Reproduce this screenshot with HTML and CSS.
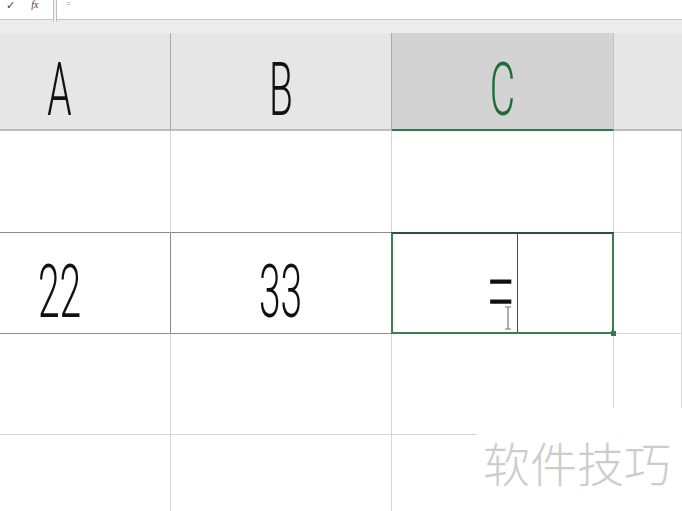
FILE: index.html
```html
<!DOCTYPE html>
<html lang="zh-CN">
<head>
<meta charset="utf-8">
<title>Excel</title>
<link rel="stylesheet" href="styles.css">
</head>
<body>
<div class="formula-bar">
  <div class="fb-buttons">
    <span class="fb-check">✓</span>
    <span class="fb-fx">fx</span>
  </div>
  <div class="fb-sep"></div>
  <div class="fb-input"><span class="fb-text">=</span></div>
</div>
<div class="strip"></div>
<div class="sheet">
  <div class="cell head"><span class="lbl">A</span></div>
  <div class="cell head"><span class="lbl">B</span></div>
  <div class="cell head head-sel"><span class="lbl">C</span></div>
  <div class="cell head head-d"></div>

  <div class="cell r1 dark-b"></div>
  <div class="cell r1 dark-b"></div>
  <div class="cell r1"></div>
  <div class="cell r1"></div>

  <div class="cell r2 dark-b dark-r"><span class="val">22</span></div>
  <div class="cell r2 dark-b dark-r"><span class="val">33</span></div>
  <div class="cell r2 active">
    <span class="eq">=</span>
    <span class="caret"></span>
    <svg class="ibeam" width="8" height="24" viewBox="0 0 8 24"><path d="M1 1h6M4 1v22M1 23h6" stroke="#777" stroke-width="1.2" fill="none"/></svg>
  </div>
  <div class="cell r2"></div>

  <div class="cell r3"></div>
  <div class="cell r3"></div>
  <div class="cell r3"></div>
  <div class="cell r3"></div>

  <div class="cell r4"></div>
  <div class="cell r4"></div>
  <div class="cell r4"></div>
  <div class="cell r4"></div>

  <div class="watermark">软件技巧</div>
</div>
</body>
</html>
```
FILE: styles.css
```css
* { box-sizing: border-box; }
html, body {
  margin: 0;
  padding: 0;
  width: 682px;
  height: 511px;
  overflow: hidden;
  background: #ffffff;
  font-family: "Roboto", "Liberation Sans", sans-serif;
}
.formula-bar {
  height: 20px;
  display: flex;
  background: #ffffff;
  border-bottom: 1px solid #c8c8c8;
}
.fb-buttons {
  width: 53px;
  display: flex;
  align-items: flex-start;
  gap: 16px;
  padding-left: 6px;
  overflow: hidden;
  color: #3a3a3a;
}
.fb-check {
  font-size: 11px;
  line-height: 1;
  font-family: "DejaVu Sans", sans-serif;
  font-weight: bold;
}
.fb-fx {
  font-family: "Liberation Serif", serif;
  font-style: italic;
  font-size: 10px;
  line-height: 1;
}
.fb-sep {
  width: 4px;
  border-left: 1px solid #bdbdbd;
  border-right: 1px solid #bdbdbd;
  background: #f2f2f2;
  height: 22px;
}
.fb-input {
  flex: 1;
  padding-left: 9px;
  overflow: hidden;
}
.fb-text {
  font-size: 9px;
  line-height: 1;
  color: #9a9a9a;
  display: block;
}
.strip {
  height: 13px;
  background: #ececec;
}
.sheet {
  position: relative;
  display: grid;
  margin-left: -51px;
  width: 733px;
  grid-template-columns: 222px 221px 222px 1fr;
  grid-template-rows: 98px 102px 101px 101px 77px;
}
.cell {
  border-right: 1px solid #d6d6d6;
  border-bottom: 1px solid #d6d6d6;
  display: flex;
  justify-content: center;
  align-items: flex-end;
  background: #ffffff;
}
.head {
  background: #e6e6e6;
  border-right: 1px solid #a9a9a9;
  border-bottom: 2px solid #bcbcbc;
  padding-bottom: 2px;
}
.head-sel {
  background: #d3d3d3;
  border-right: 1px solid #c4c4c4;
  border-bottom: 2px solid #2f7d46;
}
.head-d {
  border-right: none;
}
.lbl, .val {
  display: inline-block;
  font-size: 75px;
  font-weight: 300;
  line-height: 1;
  transform: scaleX(0.52);
}
.val { color: #111; margin-bottom: 4px; }
.lbl { color: #111; }
.head-sel .lbl { color: #1f6b38; }
.dark-b { border-bottom-color: #8c8c8c; }
.dark-r { border-right-color: #8c8c8c; }
.active {
  position: relative;
  justify-content: flex-end;
  align-items: stretch;
  padding-right: 95px;
}
.active::after {
  content: "";
  position: absolute;
  top: -1px;
  left: -1px;
  right: -1px;
  bottom: -1px;
  border: 2px solid #3a7d4e;
  border-top-color: #2c5238;
}
.active::before {
  content: "";
  position: absolute;
  right: -3px;
  bottom: -3px;
  width: 5px;
  height: 5px;
  background: #2f7d46;
  z-index: 2;
}
.eq {
  font-size: 100px;
  font-weight: 100;
  line-height: 1;
  color: #111;
  -webkit-text-stroke: 1.5px #111;
  transform: scaleX(0.5);
  transform-origin: right center;
  align-self: flex-end;
  margin-right: 2px;
  margin-bottom: -7px;
}
.caret {
  width: 1px;
  background: #4a4a4a;
}
.ibeam {
  position: absolute;
  left: 112px;
  top: 73px;
}
.watermark {
  position: absolute;
  left: 528px;
  top: 375px;
  right: 0;
  bottom: 0;
  background: #ffffff;
  color: #cccccc;
  font-family: "Noto Sans CJK SC", sans-serif;
  font-weight: 300;
  font-size: 47px;
  line-height: 1;
  padding-top: 30px;
  padding-left: 6px;
  white-space: nowrap;
}
```
